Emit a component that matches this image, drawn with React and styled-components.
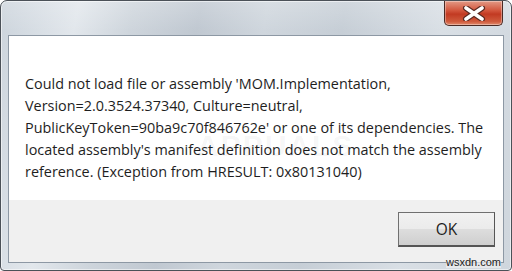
import styled, { createGlobalStyle } from 'styled-components';

const GlobalStyle = createGlobalStyle`
  html, body {
    margin: 0;
    padding: 0;
    background: #ffffff;
  }
`;

const Window = styled('div')`
  position: relative;
  box-sizing: border-box;
  width: 512px;
  height: 271px;
  border: 1px solid #4b5158;
  border-radius: 7px 7px 4px 4px;
  padding: 0 7px 7px 7px;
  display: flex;
  flex-direction: column;
  overflow: hidden;
  background:
    linear-gradient(to bottom, rgba(255,255,255,0.2), rgba(255,255,255,0) 30px),
    linear-gradient(100deg, #ccd4dc 0%, #e2e7ec 14%, #ced5dc 24%, #c0c8d1 36%, #cfd6dd 48%, #c6ced6 62%, #d9dfe5 80%, #cfd6dd 100%);
  box-shadow: inset 0 0 0 1px rgba(255,255,255,0.55);
`;

const TitleBar = styled('div')`
  height: 34px;
  display: flex;
  justify-content: flex-end;
  align-items: flex-start;
`;

const CloseButton = styled('div')`
  box-sizing: border-box;
  width: 59px;
  height: 25px;
  margin-right: 1px;
  border: 1px solid #4a2a24;
  border-top: none;
  border-radius: 0 0 5px 5px;
  display: flex;
  justify-content: center;
  align-items: center;
  background: linear-gradient(to bottom, #e39a86 0%, #d2553c 40%, #c23a22 55%, #cf5a3c 85%, #e08a6c 100%);
  box-shadow: inset 0 0 0 1px rgba(255,255,255,0.35);
`;

const Client = styled('div')`
  flex: 1;
  display: flex;
  flex-direction: column;
  border: 1px solid #8d98a4;
  background: #ffffff;
`;

const Content = styled('div')`
  height: 164px;
  box-sizing: border-box;
  padding: 37px 6px 0 16px;
`;

const Message = styled('p')`
  position: relative;
  margin: 0;
  font-family: "Open Sans", "Noto Sans", sans-serif;
  font-size: 14.4px;
  line-height: 22px;
  color: #1e1e1e;
`;

const Watermark = styled('span')`
  position: absolute;
  left: 172px;
  top: 58px;
  font-family: "Liberation Sans", sans-serif;
  font-weight: bold;
  font-size: 30px;
  line-height: 30px;
  letter-spacing: 2px;
  color: rgba(0, 0, 0, 0.05);
  pointer-events: none;
`;

const Footer = styled('div')`
  flex: 1;
  background: #f0f0f0;
  display: flex;
  justify-content: flex-end;
  align-items: flex-start;
  padding: 12px 8px 0 0;
`;

const Button = styled('button')`
  box-sizing: border-box;
  width: 97px;
  height: 35px;
  border: 1px solid #707070;
  border-right-color: #555;
  border-bottom: 2px solid #555;
  background: linear-gradient(to bottom, #f2f2f2 0%, #ebebeb 50%, #dddddd 51%, #cfcfcf 100%);
  font-family: "Open Sans", "Noto Sans", sans-serif;
  font-size: 15.5px;
  color: #1e1e1e;
  padding: 0;
`;

const SiteMark = styled('span')`
  position: absolute;
  right: 10px;
  bottom: 2px;
  font-family: "Liberation Sans", sans-serif;
  font-size: 11px;
  color: #222;
  background: rgba(240, 240, 240, 0.7);
`;

const CloseIcon = () => (
  <svg width="24" height="15" viewBox="0 0 24 15">
    <path d="M4 2 L20 13 M20 2 L4 13" stroke="#5b2a22" strokeWidth="6" strokeLinecap="round" />
    <path d="M4 2 L20 13 M20 2 L4 13" stroke="#ffffff" strokeWidth="3.6" strokeLinecap="round" />
  </svg>
);

const App = () => {
  return (
    <>
      <GlobalStyle />
      <Window>
        <TitleBar>
          <CloseButton>
            <CloseIcon />
          </CloseButton>
        </TitleBar>
        <Client>
          <Content>
            <Message>
              Could not load file or assembly 'MOM.Implementation,<br />
              Version=2.0.3524.37340, Culture=neutral,<br />
              PublicKeyToken=90ba9c70f846762e' or one of its dependencies. The<br />
              located assembly's manifest definition does not match the assembly<br />
              reference. (Exception from HRESULT: 0x80131040)
              <Watermark aria-hidden="true">APPUALS</Watermark>
            </Message>
          </Content>
          <Footer>
            <Button>OK</Button>
          </Footer>
        </Client>
        <SiteMark>wsxdn.com</SiteMark>
      </Window>
    </>
  );
};

export default App;
